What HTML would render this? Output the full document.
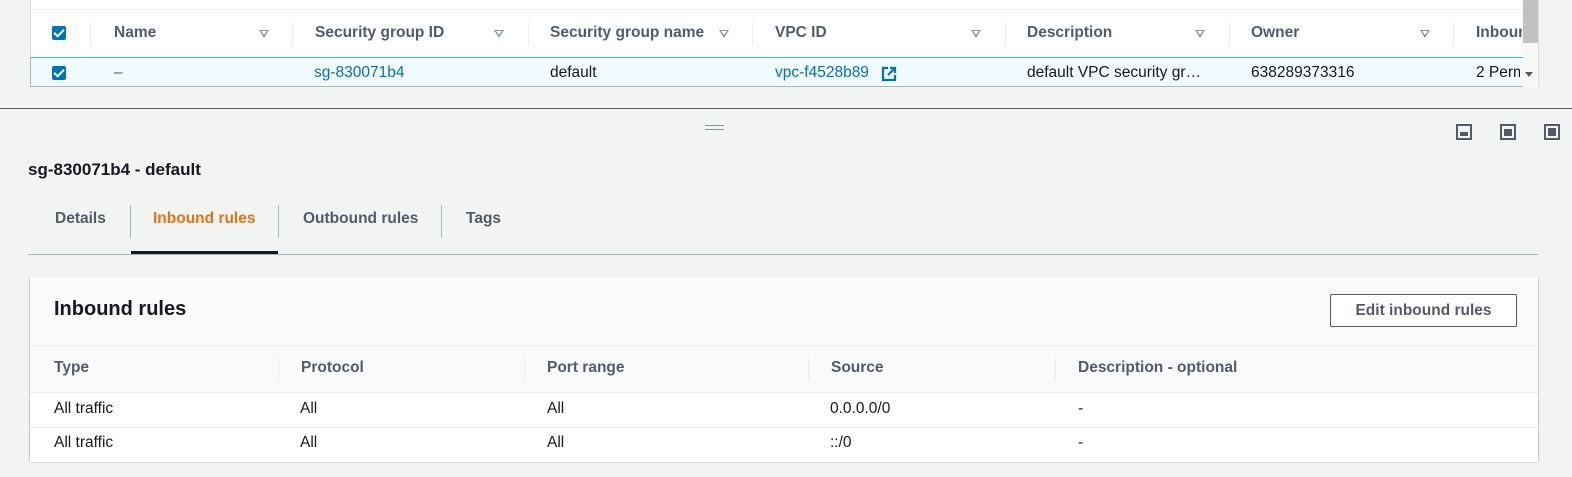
<!DOCTYPE html>
<html><head><style>
body{margin:0;width:1572px;height:477px;background:#f2f3f3;font-family:"Liberation Sans",sans-serif;font-size:15.5px;color:#16191f;position:relative;overflow:hidden}
.a{position:absolute;white-space:nowrap}
.h{font-weight:bold;color:#545b64}
.sep{position:absolute;width:1px;background:#eaeded}
.tri{position:absolute;width:0;height:0;border-left:5px solid transparent;border-right:5px solid transparent;border-top:8px solid #879596}
.tri:after{content:"";position:absolute;left:-3px;top:-7px;border-left:3px solid transparent;border-right:3px solid transparent;border-top:4px solid #fff}
.cb{position:absolute;width:14px;height:14px;background:#0073bb;border-radius:2px}
.cb:after{content:"";position:absolute;left:4px;top:1px;width:4px;height:8px;border:solid #fff;border-width:0 2px 2px 0;transform:rotate(45deg)}
.ln{color:#0073bb}
.ic{position:absolute;top:124px;width:12px;height:12px;border:2px solid #545b64}
</style></head><body>
<div class="a" style="left:30px;top:0;width:1492px;height:86px;background:#fff;border-left:1px solid #d5dbdb"></div>
<div class="a" style="left:30px;top:9px;width:1492px;height:1px;background:#eaeded"></div>
<div class="a" style="left:1522px;top:0;width:16px;height:87px;background:#f8f8f8;border-right:1px solid #ddd"></div>
<div class="a" style="left:1523px;top:0;width:15px;height:43px;background:#c1c1c1"></div>
<div class="cb" style="left:52px;top:26px"></div>
<div class="sep" style="left:90px;top:22px;height:23px"></div>
<div class="sep" style="left:292px;top:22px;height:23px"></div>
<div class="sep" style="left:528px;top:22px;height:23px"></div>
<div class="sep" style="left:752px;top:22px;height:23px"></div>
<div class="sep" style="left:1005px;top:22px;height:23px"></div>
<div class="sep" style="left:1229px;top:22px;height:23px"></div>
<div class="sep" style="left:1453px;top:22px;height:23px"></div>
<div class="a h" style="left:114px;top:24px">Name</div>
<div class="a h" style="left:315px;top:24px">Security group ID</div>
<div class="a h" style="left:550px;top:24px">Security group name</div>
<div class="a h" style="left:775px;top:24px">VPC ID</div>
<div class="a h" style="left:1027px;top:24px">Description</div>
<div class="a h" style="left:1251px;top:24px">Owner</div>
<div class="a h" style="left:1476px;top:24px;width:46px;overflow:hidden">Inbound</div>
<div class="tri" style="left:259px;top:30px"></div>
<div class="tri" style="left:494px;top:30px"></div>
<div class="tri" style="left:719px;top:30px"></div>
<div class="tri" style="left:971px;top:30px"></div>
<div class="tri" style="left:1195px;top:30px"></div>
<div class="tri" style="left:1420px;top:30px"></div>
<div class="a" style="left:30px;top:57px;width:1492px;height:28px;background:#f1faff;border-top:1px solid #44b9d6;border-bottom:1px solid #aab7b8;border-left:1px solid #aab7b8"></div>
<div class="cb" style="left:52px;top:66px"></div>
<div class="a" style="left:114px;top:64px;color:#545b64">–</div>
<div class="a ln" style="left:314px;top:64px">sg-830071b4</div>
<div class="a" style="left:550px;top:64px">default</div>
<div class="a ln" style="left:775px;top:64px">vpc-f4528b89</div>
<svg class="a" style="left:881px;top:66px" width="16" height="16" viewBox="0 0 16 16"><path d="M7 2H2v12h12V9" fill="none" stroke="#0073bb" stroke-width="2.2"/><path d="M9 2h5v5M14 2L7 9" fill="none" stroke="#0073bb" stroke-width="2.2"/></svg>
<div class="a" style="left:1027px;top:64px">default VPC security gr…</div>
<div class="a" style="left:1251px;top:64px">638289373316</div>
<div class="a" style="left:1476px;top:64px;width:44px;overflow:hidden">2 Permissions</div>
<div class="a" style="left:1525px;top:72px;border-left:4px solid transparent;border-right:4px solid transparent;border-top:5px solid #545b64"></div>
<div class="a" style="left:0;top:108px;width:1572px;height:1px;background:#545b64"></div>
<div class="a" style="left:705px;top:125px;width:19px;height:1px;background:#879596"></div>
<div class="a" style="left:705px;top:129px;width:19px;height:1px;background:#879596"></div>
<div class="ic" style="left:1456px"><div style="position:absolute;left:2px;right:2px;bottom:2px;height:4px;background:#545b64"></div></div>
<div class="ic" style="left:1500px"><div style="position:absolute;left:2px;right:2px;bottom:2px;height:7px;background:#545b64"></div></div>
<div class="ic" style="left:1544px"><div style="position:absolute;left:2px;right:2px;bottom:2px;top:2px;background:#545b64"></div></div>
<div class="a" style="left:28px;top:160px;font-weight:bold;font-size:17px">sg-830071b4 - default</div>
<div class="a h" style="left:55px;top:210px">Details</div>
<div class="a" style="left:153px;top:210px;font-weight:bold;color:#ec7211">Inbound rules</div>
<div class="a h" style="left:303px;top:210px">Outbound rules</div>
<div class="a h" style="left:466px;top:210px">Tags</div>
<div class="sep" style="left:130px;top:205px;height:33px;background:#aab7b8"></div>
<div class="sep" style="left:278px;top:205px;height:33px;background:#aab7b8"></div>
<div class="sep" style="left:441px;top:205px;height:33px;background:#aab7b8"></div>
<div class="a" style="left:28px;top:254px;width:1510px;height:1px;background:#aab7b8"></div>
<div class="a" style="left:131px;top:251px;width:147px;height:3px;background:#16191f"></div>
<div class="a" style="left:30px;top:277px;width:1508px;height:184px;background:#fafafa;box-shadow:0 1px 1px rgba(0,28,36,.3),1px 1px 1px rgba(0,28,36,.15),-1px 1px 1px rgba(0,28,36,.15)"></div>
<div class="a" style="left:54px;top:298px;font-weight:bold;font-size:20px">Inbound rules</div>
<div class="a h" style="left:1330px;top:294px;width:185px;height:31px;border:1px solid #545b64;border-radius:2px;background:#fff;text-align:center;line-height:31px;color:#545b64">Edit inbound rules</div>
<div class="a" style="left:30px;top:345px;width:1508px;height:1px;background:#eaeded"></div>
<div class="sep" style="left:278px;top:357px;height:23px"></div>
<div class="sep" style="left:524px;top:357px;height:23px"></div>
<div class="sep" style="left:808px;top:357px;height:23px"></div>
<div class="sep" style="left:1055px;top:357px;height:23px"></div>
<div class="a h" style="left:54px;top:359px">Type</div>
<div class="a h" style="left:301px;top:359px">Protocol</div>
<div class="a h" style="left:547px;top:359px">Port range</div>
<div class="a h" style="left:831px;top:359px">Source</div>
<div class="a h" style="left:1078px;top:359px">Description - optional</div>
<div class="a" style="left:30px;top:392px;width:1508px;height:69px;background:#fff;border-top:1px solid #eaeded"></div>
<div class="a" style="left:30px;top:427px;width:1508px;height:1px;background:#eaeded"></div>
<div class="a" style="left:54px;top:400px">All traffic</div>
<div class="a" style="left:300px;top:400px">All</div>
<div class="a" style="left:547px;top:400px">All</div>
<div class="a" style="left:830px;top:400px">0.0.0.0/0</div>
<div class="a" style="left:1078px;top:400px">-</div>
<div class="a" style="left:54px;top:434px">All traffic</div>
<div class="a" style="left:300px;top:434px">All</div>
<div class="a" style="left:547px;top:434px">All</div>
<div class="a" style="left:830px;top:434px">::/0</div>
<div class="a" style="left:1078px;top:434px">-</div>
</body></html>
